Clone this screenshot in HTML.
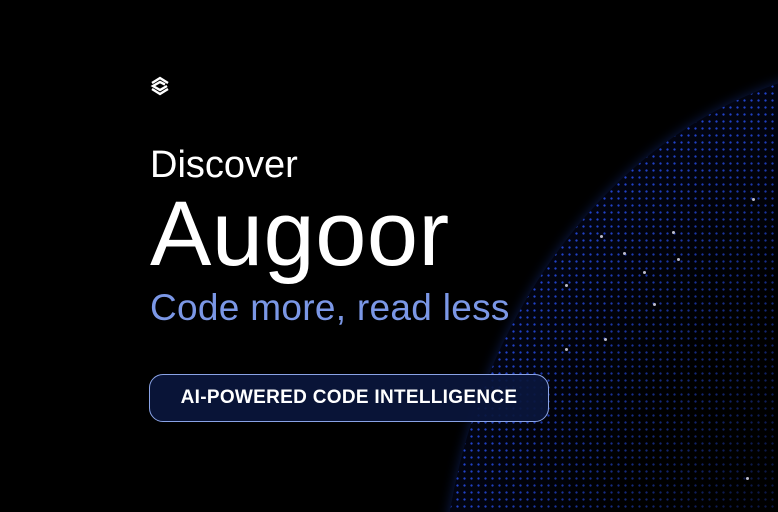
<!DOCTYPE html>
<html><head><style>
html,body{margin:0;padding:0;background:#000;width:778px;height:512px;overflow:hidden;position:relative;font-family:"Liberation Sans",sans-serif}
.globe{position:absolute;left:440px;top:62px;width:930px;height:1130px;border-radius:50%;
background:radial-gradient(ellipse at 50% 50%, rgba(0,0,0,0) 45%, rgba(8,20,90,.3) 85%, rgba(40,90,255,.85) 99%, rgba(60,110,255,.6) 100%);
box-shadow:0 0 12px rgba(40,90,255,.3)}
.dots{position:absolute;left:440px;top:62px;width:930px;height:1130px;border-radius:50%;
background-image:radial-gradient(circle, rgba(40,80,240,.85) 0.9px, transparent 1.4px);background-size:7px 7px;
-webkit-mask-image:radial-gradient(ellipse at 50% 50%, rgba(0,0,0,.35) 30%, #000 72%)}
.t{position:absolute;left:150px;color:#fff;white-space:nowrap}
.btn{position:absolute;left:149px;top:374px;width:400px;height:48px;border-radius:14px;border:1.5px solid #8aa3e6;
background:rgba(10,22,60,.92);color:#fff;font-size:19px;font-weight:bold;text-align:center;line-height:46px;letter-spacing:.3px;box-sizing:border-box}
.star{position:absolute;width:3px;height:3px;border-radius:50%;background:#bbc}
</style></head><body>
<div class="globe"></div>
<div class="dots"></div>
<div class="star" style="left:672px;top:231px"></div>
<div class="star" style="left:600px;top:235px"></div>
<div class="star" style="left:623px;top:252px"></div>
<div class="star" style="left:677px;top:258px"></div>
<div class="star" style="left:643px;top:271px"></div>
<div class="star" style="left:653px;top:303px"></div>
<div class="star" style="left:604px;top:338px"></div>
<div class="star" style="left:565px;top:348px"></div>
<div class="star" style="left:752px;top:198px"></div>
<div class="star" style="left:565px;top:284px"></div>
<div class="star" style="left:746px;top:477px"></div>
<svg style="position:absolute;left:149px;top:76px" width="22" height="20" viewBox="0 0 22 20">
<path d="M3 7 L11 2 L19 7" fill="none" stroke="#fff" stroke-width="2.4"/>
<path d="M16 8.5 L11 6 L4 10 L11 14 L18 10" fill="none" stroke="#fff" stroke-width="2.4"/>
<path d="M3 13 L11 18 L19 13" fill="none" stroke="#fff" stroke-width="2.4"/>
</svg>
<div class="t" style="top:144px;font-size:38px">Discover</div>
<div class="t" style="top:182px;font-size:92px;letter-spacing:.5px">Augoor</div>
<div class="t" style="top:287px;font-size:37px;color:#7b97e6;letter-spacing:.3px">Code more, read less</div>
<div class="btn">AI-POWERED CODE INTELLIGENCE</div>
</body></html>
